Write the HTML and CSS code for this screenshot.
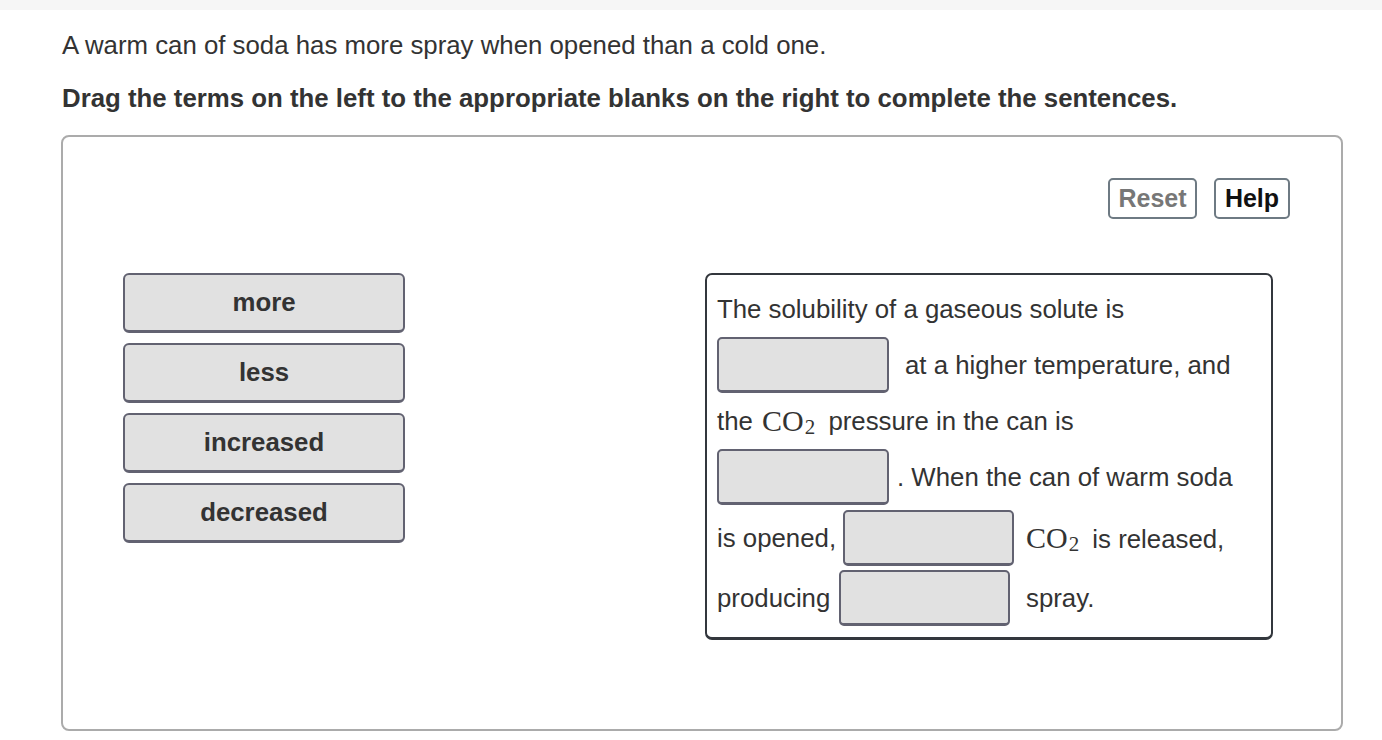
FILE: index.html
```html
<!DOCTYPE html>
<html>
<head>
<meta charset="utf-8">
<link rel="stylesheet" href="styles.css">
</head>
<body>
<div class="topbar"></div>
<div class="page">
  <p class="intro">A warm can of soda has more spray when opened than a cold one.</p>
  <p class="instr">Drag the terms on the left to the appropriate blanks on the right to complete the sentences.</p>
  <div class="panel">
    <div class="toolbar">
      <button class="btn reset">Reset</button>
      <button class="btn help">Help</button>
    </div>
    <div class="work">
      <div class="terms">
        <div class="term">more</div>
        <div class="term">less</div>
        <div class="term">increased</div>
        <div class="term">decreased</div>
      </div>
      <div class="sentence">
        <div class="row">The solubility of a gaseous solute is</div>
        <div class="row"><span class="drop"></span><span class="gap16">at a higher temperature, and</span></div>
        <div class="row">the&nbsp;<span class="chem">CO<sub>2</sub></span>&nbsp;pressure in the can is</div>
        <div class="row"><span class="drop"></span><span class="gap8">. When the can of warm soda</span></div>
        <div class="row r5"><span class="lead">is opened,</span><span class="drop d3"></span><span class="tail"><span class="chem">CO<sub>2</sub></span>&nbsp;is released,</span></div>
        <div class="row r6"><span class="lead">producing</span><span class="drop d4"></span><span class="tail">spray.</span></div>
      </div>
    </div>
  </div>
</div>
</body>
</html>
```
FILE: styles.css
```css
* { box-sizing: border-box; }
html, body { margin: 0; padding: 0; background: #fff; }
body { font-family: "Liberation Sans", Arial, sans-serif; color: #333; }
.topbar { height: 10px; background: #f6f6f6; }
.page { padding-left: 61px; }
.intro { margin: 20px 0 0 1px; font-size: 25.8px; line-height: 30px; }
.instr { margin: 23px 0 0 1px; font-size: 25.8px; line-height: 30px; font-weight: bold; }
.panel {
  margin-top: 22px;
  width: 1282px;
  height: 596px;
  border: 2px solid #ababab;
  border-radius: 8px;
}
.toolbar { display: flex; justify-content: flex-end; gap: 17px; padding-right: 51px; margin-top: 41px; }
.btn {
  height: 41px;
  border: 2px solid #6e7a83;
  border-radius: 5px;
  background: #fff;
  font-family: "Liberation Sans", Arial, sans-serif;
  font-weight: bold;
  font-size: 25px;
  padding: 0;
  line-height: 37px;
}
.reset { width: 89px; color: #777; }
.help { width: 76px; color: #111; }
.work { display: flex; align-items: flex-start; margin-top: 54px; }
.terms { margin-left: 60px; width: 282px; display: flex; flex-direction: column; gap: 10px; }
.term {
  height: 60px;
  background: #e1e1e1;
  border: 2px solid #626271;
  border-bottom-width: 3px;
  border-radius: 6px;
  font-weight: bold;
  font-size: 25.8px;
  text-align: center;
  line-height: 55px;
  color: #333;
}
.sentence {
  margin-left: 300px;
  width: 568px;
  border: 2px solid #33373d;
  border-bottom-width: 3px;
  border-radius: 7px;
  padding: 6px 10px 7px 10px;
  font-size: 25.8px;
}
.row { display: flex; align-items: center; height: 56px; white-space: nowrap; }
.r5 { margin-top: 5px; }
.r6 { margin-top: 4px; margin-bottom: 4px; }
.drop {
  display: block;
  width: 172px;
  height: 56px;
  background: #e1e1e1;
  border: 2px solid #626271;
  border-bottom-width: 3px;
  border-radius: 5px;
  flex: none;
}
.gap16 { margin-left: 16px; }
.gap8 { margin-left: 8px; }
.lead { width: 126px; }
.r6 .lead { width: 122px; }
.d3, .d4 { width: 171px; }
.tail { margin-left: 12px; }
.r6 .tail { margin-left: 16px; }
.chem { font-family: "Liberation Serif", "Times New Roman", serif; font-size: 30px; margin-left: 2px; margin-right: 6px; }
.tail .chem { margin-left: 0; }
.chem sub { font-size: 0.7em; vertical-align: -0.16em; line-height: 0; margin-left: 1px; }
```
